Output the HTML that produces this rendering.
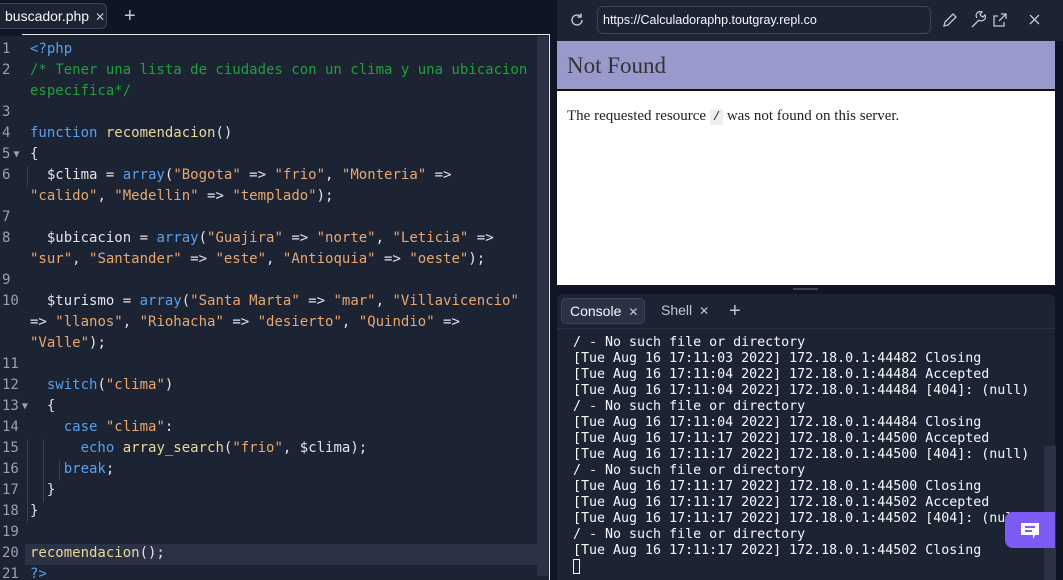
<!DOCTYPE html>
<html><head><meta charset="utf-8"><style>
*{margin:0;padding:0;box-sizing:border-box}
html{width:1063px;height:580px;overflow:hidden;background:#0e1525}
body{width:1063px;height:580px;background:#0e1525;position:relative;overflow:hidden;font-family:"Liberation Sans",sans-serif}
.tab{position:absolute;left:-4px;top:3px;width:111px;height:26px;border:1px solid #3c445c;border-radius:0 6px 6px 0;background:#1c2333;color:#f5f9fc;font-size:14px;line-height:24px;padding-left:8px}
.tab span{font-size:12px;color:#c2c8d0;margin-left:6px}
.plus{position:absolute;color:#c2c8d0;font-size:20px;line-height:20px}
.ed{position:absolute;left:0;top:34px;width:550px;height:546px;background:#1c2333;border-top:1px solid #e8e8e8;border-right:1px solid #e8e8e8}
.ed:before{content:"";position:absolute;left:-1px;top:-1px;width:23px;height:2px;background:#0e1525}
.code{position:absolute;left:0;top:4px;font-family:"DejaVu Sans Mono",monospace;font-size:14px;line-height:21px;color:#e1e4e8;white-space:pre}
.ln{position:absolute;left:0;width:30px;color:#9aa1ad;padding-left:2px}
.ln i{font-style:normal;font-size:10px;position:relative;left:3px;top:-1px}
.l{position:absolute;left:30px}
.k{color:#56a0ee}.s{color:#e8a76f}.f{color:#e9d897}.c{color:#22a03c}
.sb{position:absolute;left:537px;top:1px;width:11px;height:540px;background:#2b3245}
.hl{position:absolute;left:25px;top:509px;width:512px;height:21px;background:#2b3245}
.guide{position:absolute;width:1px;background:#3a4152}
.top{position:absolute;left:557px;top:0;width:506px;height:41px;background:#1c2333}
.url{position:absolute;left:597px;top:6px;width:334px;height:28px;border:1px solid #3c445c;border-radius:6px;background:#1c2333;color:#f5f9fc;font-size:12.5px;line-height:26px;padding-left:5px}
.web{position:absolute;left:557px;top:41px;width:498px;height:244px;background:#fff}
.nf{height:50px;background:#9999cc;border-bottom:2px solid #111;font-family:"Liberation Serif",serif;font-size:23px;color:#333;padding:12px 0 0 10px}
.msg{font-family:"Liberation Serif",serif;font-size:15px;color:#222;padding:17px 0 0 10px}
.msg code{background:#eee;font-size:12px;padding:1px 3px;font-family:"Liberation Mono",monospace}
.con{position:absolute;left:557px;top:294px;width:498px;height:286px;background:#1c2333;border-radius:6px 6px 0 0}
.ctab{position:absolute;left:4px;top:4px;width:84px;height:26px;border:1px solid #3c445c;border-radius:5px;background:#2b3245;color:#f5f9fc;font-size:14px;line-height:24px;padding-left:8px}
.ctab span,.st span{font-size:12px;color:#c2c8d0;margin-left:7px}
.st{position:absolute;left:104px;top:8px;color:#c2c8d0;font-size:14px}
.cl{position:absolute;left:0;top:34px;width:498px;height:1px;background:#2b3245}
.out{position:absolute;left:16px;top:41px;font-family:"DejaVu Sans Mono",monospace;font-size:13.3px;line-height:16px;color:#f5f9fc;white-space:pre}
.csb{position:absolute;left:487px;top:152px;width:12px;height:134px;background:#2b3245}
.chat{position:absolute;left:1005px;top:512px;width:50px;height:36px;background:#7c5cf5;border-radius:8px 0 0 8px}
</style></head><body>
<div class="tab">buscador.php<span>✕</span></div>
<div class="plus" style="left:124px;top:6px">+</div>
<div class="ed">
<div class="hl"></div>
<div class="sb"></div>
<div class="guide" style="left:27px;top:131px;height:21px"></div>
<div class="guide" style="left:27px;top:404px;height:84px"></div>
<div class="guide" style="left:43px;top:404px;height:63px"></div>
<div class="guide" style="left:59px;top:425px;height:21px"></div>
<div class="code">
<div class="ln" style="top:0">1</div><div class="l k" style="top:0">&lt;?php</div>
<div class="ln" style="top:21px">2</div><div class="l c" style="top:21px">/* Tener una lista de ciudades con un clima y una ubicacion</div>
<div class="l c" style="top:42px">especifica*/</div>
<div class="ln" style="top:63px">3</div>
<div class="ln" style="top:84px">4</div><div class="l" style="top:84px"><span class="k">function</span> <span class="f">recomendacion</span>()</div>
<div class="ln" style="top:105px">5<i>▼</i></div><div class="l" style="top:105px">{</div>
<div class="ln" style="top:126px">6</div><div class="l" style="top:126px">  $clima = <span class="k">array</span>(<span class="s">"Bogota"</span> =&gt; <span class="s">"frio"</span>, <span class="s">"Monteria"</span> =&gt;</div>
<div class="l" style="top:147px;left:30px"><span class="s">"calido"</span>, <span class="s">"Medellin"</span> =&gt; <span class="s">"templado"</span>);</div>
<div class="ln" style="top:168px">7</div>
<div class="ln" style="top:189px">8</div><div class="l" style="top:189px">  $ubicacion = <span class="k">array</span>(<span class="s">"Guajira"</span> =&gt; <span class="s">"norte"</span>, <span class="s">"Leticia"</span> =&gt;</div>
<div class="l" style="top:210px"><span class="s">"sur"</span>, <span class="s">"Santander"</span> =&gt; <span class="s">"este"</span>, <span class="s">"Antioquia"</span> =&gt; <span class="s">"oeste"</span>);</div>
<div class="ln" style="top:231px">9</div>
<div class="ln" style="top:252px">10</div><div class="l" style="top:252px">  $turismo = <span class="k">array</span>(<span class="s">"Santa Marta"</span> =&gt; <span class="s">"mar"</span>, <span class="s">"Villavicencio"</span></div>
<div class="l" style="top:273px">=&gt; <span class="s">"llanos"</span>, <span class="s">"Riohacha"</span> =&gt; <span class="s">"desierto"</span>, <span class="s">"Quindio"</span> =&gt;</div>
<div class="l" style="top:294px"><span class="s">"Valle"</span>);</div>
<div class="ln" style="top:315px">11</div>
<div class="ln" style="top:336px">12</div><div class="l" style="top:336px">  <span class="k">switch</span>(<span class="s">"clima"</span>)</div>
<div class="ln" style="top:357px">13<i>▼</i></div><div class="l" style="top:357px">  {</div>
<div class="ln" style="top:378px">14</div><div class="l" style="top:378px">    <span class="k">case</span> <span class="s">"clima"</span>:</div>
<div class="ln" style="top:399px">15</div><div class="l" style="top:399px">      <span class="k">echo</span> <span class="f">array_search</span>(<span class="s">"frio"</span>, $clima);</div>
<div class="ln" style="top:420px">16</div><div class="l" style="top:420px">    <span class="k">break</span>;</div>
<div class="ln" style="top:441px">17</div><div class="l" style="top:441px">  }</div>
<div class="ln" style="top:462px">18</div><div class="l" style="top:462px">}</div>
<div class="ln" style="top:483px">19</div>
<div class="ln" style="top:504px">20</div><div class="l f" style="top:504px">recomendacion<span style="color:#e1e4e8">();</span></div>
<div class="ln" style="top:525px">21</div><div class="l k" style="top:525px">?&gt;</div>
</div>
</div>
<div class="top"></div>
<svg style="position:absolute;left:568px;top:11px" width="18" height="18" viewBox="0 0 18 18" fill="none" stroke="#c2c8d0" stroke-width="1.4"><path d="M14 9a5 5 0 1 1-1.5-3.6M13 2.5v3.5h-3.5"/></svg>
<div class="url">https://Calculadoraphp.toutgray.repl.co</div>
<svg style="position:absolute;left:940px;top:10px" width="110" height="20" viewBox="0 0 110 20" fill="none" stroke="#c2c8d0" stroke-width="1.3"><path d="M4 16l1-4 8-8 3 3-8 8z"/><path d="M32 17l7-7M39 10a4 4 0 0 0 6-5l-2 2-2-1-1-2 2-2a4 4 0 0 0-5 6"/><path d="M58 6h-4v10h10v-4M61 4h5v5M66 4l-7 7"/><path d="M90 5l9 9M99 5l-9 9"/></svg>
<div class="web"><div class="nf">Not Found</div><div class="msg">The requested resource <code>/</code> was not found on this server.</div></div>
<div style="position:absolute;left:793px;top:288px;width:25px;height:2px;background:#3c445c"></div>
<div class="con">
<div class="ctab">Console<span>✕</span></div>
<div class="st">Shell<span>✕</span></div>
<div class="plus" style="left:172px;top:7px">+</div>
<div class="cl"></div>
<div class="csb"></div>
<div class="out">/ - No such file or directory
[Tue Aug 16 17:11:03 2022] 172.18.0.1:44482 Closing
[Tue Aug 16 17:11:04 2022] 172.18.0.1:44484 Accepted
[Tue Aug 16 17:11:04 2022] 172.18.0.1:44484 [404]: (null)
/ - No such file or directory
[Tue Aug 16 17:11:04 2022] 172.18.0.1:44484 Closing
[Tue Aug 16 17:11:17 2022] 172.18.0.1:44500 Accepted
[Tue Aug 16 17:11:17 2022] 172.18.0.1:44500 [404]: (null)
/ - No such file or directory
[Tue Aug 16 17:11:17 2022] 172.18.0.1:44500 Closing
[Tue Aug 16 17:11:17 2022] 172.18.0.1:44502 Accepted
[Tue Aug 16 17:11:17 2022] 172.18.0.1:44502 [404]: (null)
/ - No such file or directory
[Tue Aug 16 17:11:17 2022] 172.18.0.1:44502 Closing
<span style="display:inline-block;width:7px;height:15px;border:1px solid #f5f9fc;vertical-align:middle"></span></div>
</div>
<div class="chat"><svg style="position:absolute;left:14px;top:9px" width="22" height="20" viewBox="0 0 22 20"><path d="M2 2h18v12h-4l-2 4v-4H2z" fill="#fff"/><path d="M6 6h10M6 10h7" stroke="#7c5cf5" stroke-width="2"/></svg></div>
</body></html>
